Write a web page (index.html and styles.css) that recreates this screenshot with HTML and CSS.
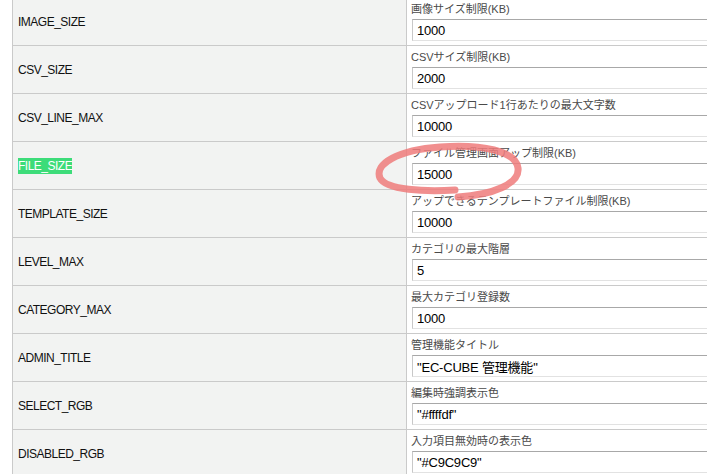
FILE: index.html
```html
<!DOCTYPE html>
<html lang="ja">
<head>
    <meta charset="UTF-8">
    <title>パラメーター設定</title>
    <link rel="stylesheet" href="styles.css">
</head>
<body>
    <table class="param-table">
        <tr>
            <th>IMAGE_SIZE</th>
            <td><div class="label">画像サイズ制限(KB)</div><input class="value" type="text" value="1000"></td>
        </tr>
        <tr>
            <th>CSV_SIZE</th>
            <td><div class="label">CSVサイズ制限(KB)</div><input class="value" type="text" value="2000"></td>
        </tr>
        <tr>
            <th>CSV_LINE_MAX</th>
            <td><div class="label">CSVアップロード1行あたりの最大文字数</div><input class="value" type="text" value="10000"></td>
        </tr>
        <tr>
            <th><span class="hit">FILE_SIZE</span></th>
            <td><div class="label">ファイル管理画面アップ制限(KB)</div><input class="value" type="text" value="15000"></td>
        </tr>
        <tr>
            <th>TEMPLATE_SIZE</th>
            <td><div class="label">アップできるテンプレートファイル制限(KB)</div><input class="value" type="text" value="10000"></td>
        </tr>
        <tr>
            <th>LEVEL_MAX</th>
            <td><div class="label">カテゴリの最大階層</div><input class="value" type="text" value="5"></td>
        </tr>
        <tr>
            <th>CATEGORY_MAX</th>
            <td><div class="label">最大カテゴリ登録数</div><input class="value" type="text" value="1000"></td>
        </tr>
        <tr>
            <th>ADMIN_TITLE</th>
            <td><div class="label">管理機能タイトル</div><input class="value" type="text" value='"EC-CUBE 管理機能"'></td>
        </tr>
        <tr>
            <th>SELECT_RGB</th>
            <td><div class="label">編集時強調表示色</div><input class="value" type="text" value='"#ffffdf"'></td>
        </tr>
        <tr>
            <th>DISABLED_RGB</th>
            <td><div class="label">入力項目無効時の表示色</div><input class="value" type="text" value='"#C9C9C9"'></td>
        </tr>
    </table>

    <!-- hand-drawn mark over FILE_SIZE value -->
    <svg class="mark" width="707" height="474" viewBox="0 0 707 474">
        <path d="M455 190 C425 192 386 190 380 178 C374 164 398 150 440 147 C482 144 516 151 518 168 C520 184 492 195 458 197"
              fill="none" stroke="#ee7b7b" stroke-opacity="0.85" stroke-width="7" stroke-linecap="round"/>
    </svg>
</body>
</html>
```

FILE: styles.css
```css
body {
    margin: 0;
    background: #fff;
    font-family: "Liberation Sans", "Noto Sans CJK JP", sans-serif;
    overflow: hidden;
    position: relative;
    height: 474px;
}

.param-table {
    border-collapse: collapse;
    margin: -3px 0 0 12px;
    width: 900px;
    table-layout: fixed;
}

.param-table tr {
    height: 48px;
}

.param-table th,
.param-table td {
    border: 1px solid #cacaca;
    vertical-align: middle;
}

.param-table th {
    width: 388px;
    background: #f2f3f2;
    padding: 0 0 0 5px;
    text-align: left;
    font-weight: normal;
    font-size: 12px;
    letter-spacing: -0.5px;
    color: #111;
}

.param-table td {
    background: #fff;
    padding: 4px 0 4px 4px;
}

.hit {
    background: #3ddc79;
    color: #fff;
    padding: 1px 0;
}

.label {
    font-size: 11px;
    line-height: 14px;
    color: #4a4a4a;
    margin-bottom: 3px;
    white-space: nowrap;
}

.value {
    display: block;
    box-sizing: border-box;
    width: 480px;
    height: 22px;
    margin: 0 0 0 1px;
    padding: 0 4px;
    font-family: "Liberation Sans", "Noto Sans CJK JP", sans-serif;
    font-size: 13px;
    letter-spacing: -0.2px;
    color: #000;
    border: 1px solid #e2e2e2;
    border-top-color: #a8a8a8;
    border-left-color: #c8c8c8;
    outline: none;
}

.mark {
    position: absolute;
    top: 0;
    left: 0;
    pointer-events: none;
}
```
